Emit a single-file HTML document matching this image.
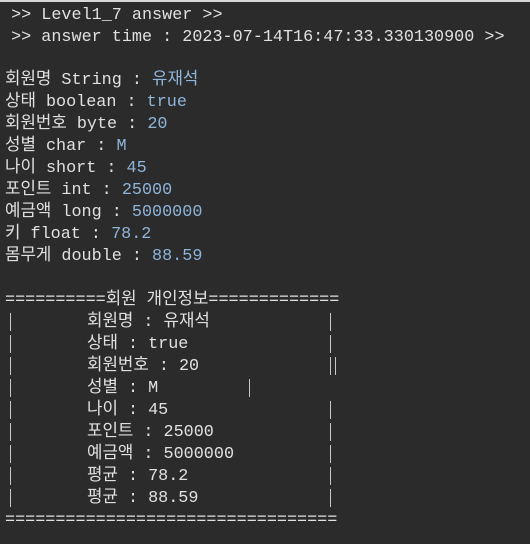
<!DOCTYPE html>
<html><head><meta charset="utf-8"><style>
html,body{margin:0;padding:0}
body{width:530px;height:544px;background:#2b2b2b;overflow:hidden;position:relative;border-top:2px solid #d8d8d8;box-sizing:border-box;
font-family:"Liberation Mono","Noto Sans CJK KR",monospace;font-size:16.8px;color:#e0e0e0}
.l{position:absolute;white-space:pre;line-height:22px;height:22px}
.v{color:#8fb4d9}
.b{position:absolute;width:1px;height:18px;background:#c8c8c8}
</style></head><body>
<div class="l" style="left:1px;top:3px"> &gt;&gt; Level1_7 answer &gt;&gt;</div>
<div class="l" style="left:1px;top:25px"> &gt;&gt; answer time : 2023-07-14T16:47:33.330130900 &gt;&gt;</div>
<div class="l" style="left:5px;top:68px">회원명 String : <span class="v">유재석</span></div>
<div class="l" style="left:5px;top:90px">상태 boolean : <span class="v">true</span></div>
<div class="l" style="left:5px;top:112px">회원번호 byte : <span class="v">20</span></div>
<div class="l" style="left:5px;top:134px">성별 char : <span class="v">M</span></div>
<div class="l" style="left:5px;top:156px">나이 short : <span class="v">45</span></div>
<div class="l" style="left:5px;top:178px">포인트 int : <span class="v">25000</span></div>
<div class="l" style="left:5px;top:200px">예금액 long : <span class="v">5000000</span></div>
<div class="l" style="left:5px;top:222px">키 float : <span class="v">78.2</span></div>
<div class="l" style="left:5px;top:244px">몸무게 double : <span class="v">88.59</span></div>
<div class="l" style="left:5px;top:288px">==========회원 개인정보=============</div>
<div class="l" style="left:87px;top:310px">회원명 : 유재석</div>
<div class="l" style="left:87px;top:332px">상태 : true</div>
<div class="l" style="left:87px;top:354px">회원번호 : 20</div>
<div class="l" style="left:87px;top:376px">성별 : M</div>
<div class="l" style="left:87px;top:398px">나이 : 45</div>
<div class="l" style="left:87px;top:420px">포인트 : 25000</div>
<div class="l" style="left:87px;top:442px">예금액 : 5000000</div>
<div class="l" style="left:87px;top:464px">평균 : 78.2</div>
<div class="l" style="left:87px;top:486px">평균 : 88.59</div>
<div class="l" style="left:5px;top:508px">=================================</div>
<div class="b" style="left:10px;top:311px"></div><div class="b" style="left:330px;top:311px"></div>
<div class="b" style="left:10px;top:333px"></div><div class="b" style="left:330px;top:333px"></div>
<div class="b" style="left:10px;top:355px"></div><div class="b" style="left:330px;top:355px"></div><div class="b" style="left:335px;top:355px"></div>
<div class="b" style="left:10px;top:377px"></div><div class="b" style="left:249px;top:377px"></div>
<div class="b" style="left:10px;top:399px"></div><div class="b" style="left:330px;top:399px"></div>
<div class="b" style="left:10px;top:421px"></div><div class="b" style="left:330px;top:421px"></div>
<div class="b" style="left:10px;top:443px"></div><div class="b" style="left:330px;top:443px"></div>
<div class="b" style="left:10px;top:465px"></div><div class="b" style="left:330px;top:465px"></div>
<div class="b" style="left:10px;top:487px"></div><div class="b" style="left:330px;top:487px"></div>
</body></html>
